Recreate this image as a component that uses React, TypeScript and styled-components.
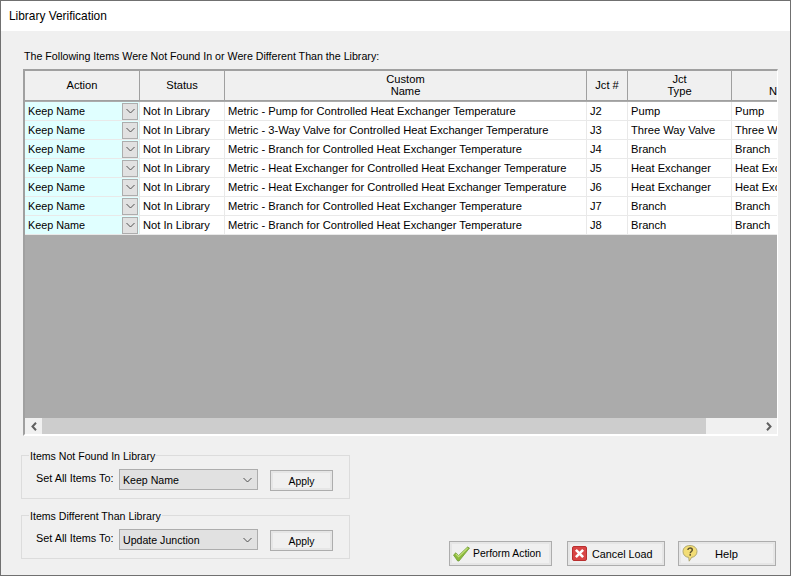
import React from "react";
import styled, { createGlobalStyle } from "styled-components";

const Global = createGlobalStyle`
  html, body { margin: 0; padding: 0; background: #f0f0f0; }
  #root { width: 791px; height: 576px; overflow: hidden; }
  * { box-sizing: border-box; }
`;

const COLS = "115px 85px 362px 41px 104px 120px";
const FONT = `"Liberation Sans", Arial, sans-serif`;

const Win = styled.div`
  width: 791px; height: 576px; display: flex; flex-direction: column;
  border: 1px solid #707070; background: #f0f0f0;
  font: 11.15px ${FONT}; color: #000;
`;
const TitleBar = styled.div`
  height: 30px; flex: none; background: #fff; padding: 9px 0 0 8px;
  font-size: 11.9px; line-height: 13px;
`;
const Body = styled.div`
  flex: 1; min-height: 0; display: flex; flex-direction: column; padding: 18px 13px 8px 20px;
`;
const Intro = styled.div`
  height: 14px; line-height: 14px; margin: 0 0 6px 3px; white-space: nowrap; font-size: 10.67px;
`;
const GridFrame = styled.div`
  width: 755px; height: 367px; flex: none; display: flex; flex-direction: column; overflow: hidden;
  margin-left: 2px;
  border-top: 2px solid #a0a0a0; border-left: 2px solid #a0a0a0;
  border-right: 1px solid #fff; border-bottom: 2px solid #fff; background: #ababab;
`;
const HeaderRow = styled.div`
  display: grid; grid-template-columns: ${COLS}; height: 30px; flex: none; background: #f0f0f0;
  border-bottom: 1px solid #a0a0a0; margin-bottom: 1px;
`;
const HeadCell = styled.div`
  display: flex; align-items: center; justify-content: center; text-align: center;
  line-height: 12px; border-right: 1px solid #a0a0a0; overflow: hidden; white-space: pre;
  padding-bottom: 1px;
`;
const LastHead = styled(HeadCell)`
  align-items: flex-end; justify-content: flex-start; padding: 0 0 3px 37px; border-right: 0;
`;
const DataRow = styled.div`
  display: grid; grid-template-columns: ${COLS}; height: 19px; flex: none; background: #fff;
  border-bottom: 1px solid #e9e9e9;
`;
const Cell = styled.div<{ $action?: boolean }>`
  display: flex; align-items: center; justify-content: space-between; padding: 0 0 0 3px;
  white-space: nowrap; overflow: hidden; line-height: 18px;
  border-right: 1px solid #e9e9e9;
  font-size: ${(p) => (p.$action ? "10.8px" : "inherit")};
  background: ${(p) => (p.$action ? "#e0ffff" : "#fff")};
`;
const CellBtn = styled.div`
  width: 16px; height: 17px; margin-right: 1px; flex: none; background: #e1e1e1; border: 1px solid #adadad;
  display: flex; align-items: center; justify-content: center;
`;
const Empty = styled.div`
  flex: 1; background: #ababab;
`;
const ScrollBar = styled.div`
  height: 16px; flex: none; display: flex; align-items: stretch; background: #f0f0f0; margin-top: 1px;
`;
const ScrollBtn = styled.div`
  width: 17px; flex: none; display: flex; align-items: center; justify-content: center;
`;
const Thumb = styled.div`
  width: 664px; flex: none; background: #cdcdcd;
`;
const Spacer = styled.div`
  flex: 1;
`;
const Bottom = styled.div`
  flex: 1; display: flex; justify-content: space-between; align-items: flex-end;
`;
const Groups = styled.div`
  display: flex; flex-direction: column; gap: 16px; margin-bottom: 8px;
`;
const Group = styled.section`
  width: 329px; height: 44px; padding: 13px 15px 0 14px; border: 1px solid #dcdcdc;
  display: flex; align-items: flex-start; position: relative;
`;
const GroupTitle = styled.div`
  position: absolute; left: 7px; top: -7px; padding: 0 1px; background: #f0f0f0; line-height: 14px;
  white-space: nowrap; font-size: 10.58px;
`;
const Label = styled.div`
  width: 83px; flex: none; white-space: nowrap; line-height: 14px; margin-top: 2px; font-size: 10.85px;
`;
const Select = styled.div`
  width: 139px; height: 21px; flex: none; display: flex; align-items: center; justify-content: space-between;
  padding: 1px 5px 0 3px; background: #e1e1e1; border: 1px solid #adadad; font-size: 10.6px;
`;
const FormBtn = styled.button`
  font: inherit; color: #000; padding: 0; cursor: default;
  background: #f0f0f0; border: 1px solid #adadad; box-shadow: inset 0 0 0 2px #e6e6e6;
`;
const Apply = styled(FormBtn)`
  width: 63px; height: 21px; margin-left: 12px; margin-top: 1px; padding-top: 1px; font-size: 10.4px;
`;
const Actions = styled.div`
  display: flex; margin-bottom: 1px; margin-right: 1px;
`;
const ActionBtn = styled(FormBtn)<{ $w: number; $gap: number; $textLeft: number; $size: number }>`
  width: ${(p) => p.$w}px; height: 25px; margin-left: ${(p) => p.$gap}px; font-size: ${(p) => p.$size}px;
  display: flex; align-items: center; position: relative; padding-left: ${(p) => p.$textLeft}px; white-space: nowrap;
  & > svg { position: absolute; left: 2px; top: 2px; }
`;

const Chevron = ({ w = 9, c = "#505050" }: { w?: number; c?: string }) => (
  <svg width={w} height={6} viewBox="0 0 9 6">
    <path d="M.5 1l4 4 4-4" fill="none" stroke={c} strokeWidth="1" />
  </svg>
);
const ArrowL = () => (
  <svg width="6" height="9" viewBox="0 0 6 9">
    <path d="M5 .8L1.5 4.5 5 8.2" fill="none" stroke="#606060" strokeWidth="2" />
  </svg>
);
const ArrowR = () => (
  <svg width="6" height="9" viewBox="0 0 6 9">
    <path d="M1 .8L4.5 4.5 1 8.2" fill="none" stroke="#606060" strokeWidth="2" />
  </svg>
);
const CheckIcon = () => (
  <svg width="19" height="19" viewBox="0 0 19 19">
    <path d="M1.500 11l2.400-2.200 2.700 2.800L15.600 3l1.900 1.100L7 17h-1.300z" fill="#8dbb3c" stroke="#6d9a35" strokeWidth=".8" />
    <path d="M3.900 9.800l2.700 2.900L15.600 4.200" fill="none" stroke="#c4e07e" strokeWidth="1.100" />
  </svg>
);
const CrossIcon = () => (
  <svg width="19" height="19" viewBox="0 0 19 19">
    <rect x="2.500" y="2.500" width="14" height="14" rx="1.500" fill="#d84545" stroke="#b92f2f" />
    <path d="M5.900 5.900l7.200 7.200M13.100 5.900l-7.200 7.200" stroke="#fff" strokeWidth="2.600" />
  </svg>
);
const HelpIcon = () => (
  <svg width="19" height="19" viewBox="0 0 19 19">
    <path d="M9 1.500c4.200 0 7 2.700 7 6s-2.400 5.500-5.400 5.900l-2.400 3.800-.5-3.800C4.400 13 2 11 2 7.500s2.800-6 7-6z" fill="#f3dd75" stroke="#a8a26a" strokeWidth=".9" />
    <path d="M6.800 6C7 4.700 8 4.100 9.100 4.100c1.300 0 2.200.8 2.200 1.900 0 1.500-2.100 1.600-2.100 3.300" fill="none" stroke="#5b5230" strokeWidth="1.500" />
    <rect x="8.400" y="10.100" width="1.600" height="1.600" fill="#5b5230" />
  </svg>
);

const rows = [
  ["Metric - Pump for Controlled Heat Exchanger Temperature", "J2", "Pump", "Pump"],
  ["Metric - 3-Way Valve for Controlled Heat Exchanger Temperature", "J3", "Three Way Valve", "Three Way Valve"],
  ["Metric - Branch for Controlled Heat Exchanger Temperature", "J4", "Branch", "Branch"],
  ["Metric - Heat Exchanger for Controlled Heat Exchanger Temperature", "J5", "Heat Exchanger", "Heat Exchanger"],
  ["Metric - Heat Exchanger for Controlled Heat Exchanger Temperature", "J6", "Heat Exchanger", "Heat Exchanger"],
  ["Metric - Branch for Controlled Heat Exchanger Temperature", "J7", "Branch", "Branch"],
  ["Metric - Branch for Controlled Heat Exchanger Temperature", "J8", "Branch", "Branch"],
];

export default function App() {
  return (
    <Win>
      <Global />
      <TitleBar>Library Verification</TitleBar>
      <Body>
        <Intro>The Following Items Were Not Found In or Were Different Than the Library:</Intro>
        <GridFrame>
          <HeaderRow>
            <HeadCell>Action</HeadCell>
            <HeadCell>Status</HeadCell>
            <HeadCell>{"Custom\nName"}</HeadCell>
            <HeadCell>Jct #</HeadCell>
            <HeadCell>{"Jct\nType"}</HeadCell>
            <LastHead>Name</LastHead>
          </HeaderRow>
          {rows.map((r, i) => (
            <DataRow key={i}>
              <Cell $action>
                Keep Name
                <CellBtn><Chevron /></CellBtn>
              </Cell>
              <Cell>Not In Library</Cell>
              <Cell>{r[0]}</Cell>
              <Cell>{r[1]}</Cell>
              <Cell>{r[2]}</Cell>
              <Cell>{r[3]}</Cell>
            </DataRow>
          ))}
          <Empty />
          <ScrollBar>
            <ScrollBtn><ArrowL /></ScrollBtn>
            <Thumb />
            <Spacer />
            <ScrollBtn><ArrowR /></ScrollBtn>
          </ScrollBar>
        </GridFrame>
        <Bottom>
          <Groups>
            <Group>
              <GroupTitle>Items Not Found In Library</GroupTitle>
              <Label>Set All Items To:</Label>
              <Select>Keep Name<Chevron /></Select>
              <Apply>Apply</Apply>
            </Group>
            <Group>
              <GroupTitle>Items Different Than Library</GroupTitle>
              <Label>Set All Items To:</Label>
              <Select>Update Junction<Chevron /></Select>
              <Apply>Apply</Apply>
            </Group>
          </Groups>
          <Actions>
            <ActionBtn $w={103} $gap={0} $textLeft={23} $size={10.4}><CheckIcon />Perform Action</ActionBtn>
            <ActionBtn $w={98} $gap={15} $textLeft={24} $size={10.8}><CrossIcon />Cancel Load</ActionBtn>
            <ActionBtn $w={98} $gap={13} $textLeft={36} $size={11.15}><HelpIcon />Help</ActionBtn>
          </Actions>
        </Bottom>
      </Body>
    </Win>
  );
}
